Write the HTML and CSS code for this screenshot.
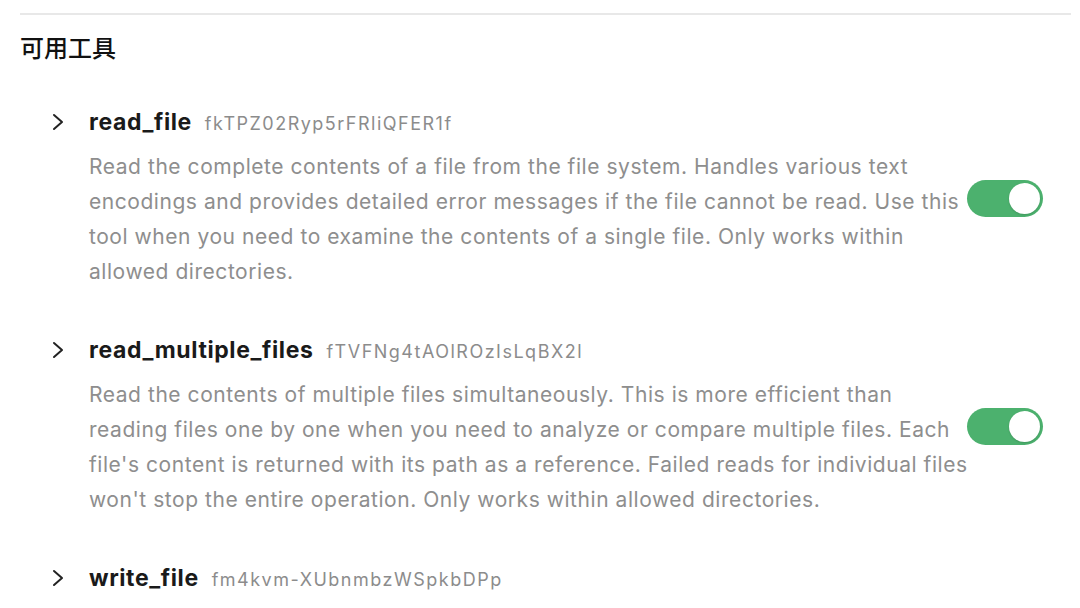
FILE: index.html
```html
<!DOCTYPE HTML>
<html>
<head>
  <title>可用工具</title>
  <meta http-equiv='content-type' content='text/html; charset=utf-8'>
  <link rel="stylesheet" href="styles.css">
</head>
<body>
  <div class="divider"></div>
  <h2 class="sectionTitle">可用工具</h2>

  <div class="toolList">
    <div class="toolItem">
      <div class="toolMain">
        <div class="toolHead">
          <svg class="chevron" width="12" height="18" viewBox="0 0 12 18"><path d="M2 2 L10 9 L2 16" fill="none" stroke="#222" stroke-width="2" stroke-linecap="round" stroke-linejoin="round"/></svg>
          <span class="toolName">read_file</span>
          <span class="toolId">fkTPZ02Ryp5rFRliQFER1f</span>
        </div>
        <div class="toolDesc">Read the complete contents of a file from the file system. Handles various text encodings and provides detailed error messages if the file cannot be read. Use this tool when you need to examine the contents of a single file. Only works within allowed directories.</div>
      </div>
      <div class="toggle on"><span class="knob"></span></div>
    </div>

    <div class="toolItem">
      <div class="toolMain">
        <div class="toolHead">
          <svg class="chevron" width="12" height="18" viewBox="0 0 12 18"><path d="M2 2 L10 9 L2 16" fill="none" stroke="#222" stroke-width="2" stroke-linecap="round" stroke-linejoin="round"/></svg>
          <span class="toolName">read_multiple_files</span>
          <span class="toolId">fTVFNg4tAOlROzIsLqBX2l</span>
        </div>
        <div class="toolDesc">Read the contents of multiple files simultaneously. This is more efficient than reading files one by one when you need to analyze or compare multiple files. Each file's content is returned with its path as a reference. Failed reads for individual files won't stop the entire operation. Only works within allowed directories.</div>
      </div>
      <div class="toggle on"><span class="knob"></span></div>
    </div>

    <div class="toolItem">
      <div class="toolMain">
        <div class="toolHead">
          <svg class="chevron" width="12" height="18" viewBox="0 0 12 18"><path d="M2 2 L10 9 L2 16" fill="none" stroke="#222" stroke-width="2" stroke-linecap="round" stroke-linejoin="round"/></svg>
          <span class="toolName">write_file</span>
          <span class="toolId">fm4kvm-XUbnmbzWSpkbDPp</span>
        </div>
      </div>
    </div>
  </div>
</body>
</html>
```

FILE: styles.css
```css
body {
  margin: 0;
  padding: 0 20px;
  background-color: #fff;
  font-family: Inter, "Noto Sans", "Noto Sans CJK SC", sans-serif;
  color: #1d1d1f;
  overflow: hidden;
}

.divider {
  margin-top: 13px;
  border-top: 2px solid #e8e8e8;
  margin-right: -11px;
}

.sectionTitle {
  margin: 17px 0 0 0;
  font-size: 24px;
  line-height: 30px;
  font-weight: 500;
  font-family: "Noto Sans CJK SC", sans-serif;
  color: #111;
}

.toolList {
  padding-left: 32px;
  margin-top: 45px;
}

.toolItem {
  display: flex;
  align-items: center;
  margin-bottom: 46px;
}

.toolMain {
  flex: 1;
}

.toolHead {
  display: flex;
  align-items: center;
  height: 30px;
}

.chevron {
  flex-shrink: 0;
  margin-right: 25px;
}

.toolName {
  font-size: 23px;
  font-weight: 700;
  letter-spacing: 0.6px;
  color: #1a1a1a;
  margin-right: 13px;
}

.toolId {
  font-size: 18px;
  letter-spacing: 1.5px;
  color: #8c8c8c;
  padding-top: 2px;
}

.toolDesc {
  margin-top: 12px;
  margin-right: -6px;
  padding-left: 37px;
  font-size: 21px;
  letter-spacing: 0.55px;
  line-height: 35px;
  color: #8e8e8e;
}

.toggle {
  flex-shrink: 0;
  width: 76px;
  height: 37px;
  border-radius: 19px;
  background-color: #4cb16e;
  margin-right: 17px;
  display: flex;
  align-items: center;
  justify-content: flex-end;
  padding: 0 3px;
  box-sizing: border-box;
}

.knob {
  width: 31px;
  height: 31px;
  border-radius: 50%;
  background-color: #fff;
  box-shadow: 0 1px 2px rgba(0, 0, 0, 0.15);
}
```
